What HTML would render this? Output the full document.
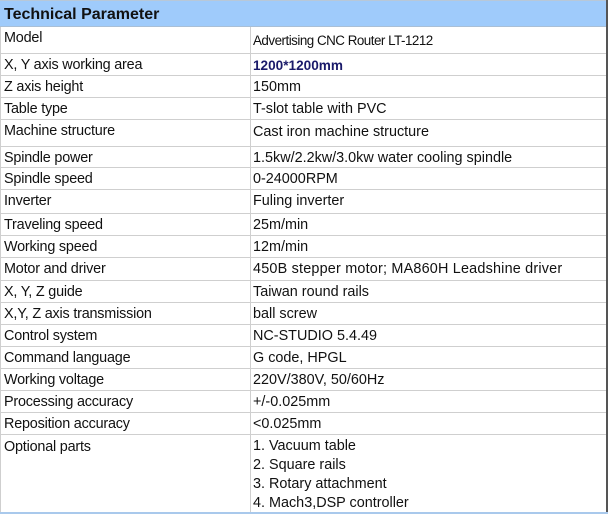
<!DOCTYPE html>
<html><head><style>
html,body{margin:0;padding:0;width:609px;height:515px;overflow:hidden;background:#fff;font-family:"Liberation Sans",sans-serif;color:#111}
.hd{position:absolute;left:0;top:0;width:607px;height:27px;background:#9fcbfb;border-top:1px solid #b8c8d8;box-sizing:border-box;font-weight:bold;font-size:16px;line-height:27px;padding-left:4px;border-bottom:1px solid #a9bfd6}
.r{position:absolute;left:0;width:607px;border-bottom:1px solid #cfcfcf;box-sizing:border-box;font-size:14.4px;line-height:17px}
.c1{position:absolute;left:4px;top:3px;letter-spacing:-0.2px}
.c2{position:absolute;left:253px;top:3px}
.v{position:absolute;left:250px;top:27px;width:1px;height:486px;background:#cfcfcf}
.rb{position:absolute;left:606px;top:0;width:2px;height:513px;background:#555}
.lb{position:absolute;left:0;top:27px;width:1px;height:486px;background:#cfcfcf}
.bb{position:absolute;left:0;top:512px;width:608px;height:2px;background:#a9c9ec}
</style></head><body>
<div class="hd">Technical Parameter</div>
<div class="r" style="top:27px;height:27px"><span class="c1">Model</span><span class="c2" style="top:5px;font-size:13.4px;letter-spacing:-0.5px">Advertising CNC Router LT-1212</span></div>
<div class="r" style="top:54px;height:22px"><span class="c1">X, Y axis working area</span><span class="c2" style="font-weight:bold;color:#1a1a6a;font-size:13.6px">1200*1200mm</span></div>
<div class="r" style="top:76px;height:22px"><span class="c1">Z axis height</span><span class="c2">150mm</span></div>
<div class="r" style="top:98px;height:22px"><span class="c1">Table type</span><span class="c2">T-slot table with PVC</span></div>
<div class="r" style="top:120px;height:27px"><span class="c1">Machine structure</span><span class="c2" style="top:4px">Cast iron machine structure</span></div>
<div class="r" style="top:147px;height:21px"><span class="c1">Spindle power</span><span class="c2">1.5kw/2.2kw/3.0kw water cooling spindle</span></div>
<div class="r" style="top:168px;height:22px"><span class="c1">Spindle speed</span><span class="c2">0-24000RPM</span></div>
<div class="r" style="top:190px;height:24px"><span class="c1">Inverter</span><span class="c2" style="top:3px">Fuling inverter</span></div>
<div class="r" style="top:214px;height:22px"><span class="c1">Traveling speed</span><span class="c2">25m/min</span></div>
<div class="r" style="top:236px;height:22px"><span class="c1">Working speed</span><span class="c2">12m/min</span></div>
<div class="r" style="top:258px;height:23px"><span class="c1">Motor and driver</span><span class="c2" style="top:3px;letter-spacing:0.2px">450B stepper motor; MA860H Leadshine driver</span></div>
<div class="r" style="top:281px;height:22px"><span class="c1">X, Y, Z guide</span><span class="c2">Taiwan round rails</span></div>
<div class="r" style="top:303px;height:22px"><span class="c1">X,Y, Z axis transmission</span><span class="c2">ball screw</span></div>
<div class="r" style="top:325px;height:22px"><span class="c1">Control system</span><span class="c2">NC-STUDIO 5.4.49</span></div>
<div class="r" style="top:347px;height:22px"><span class="c1">Command language</span><span class="c2">G code, HPGL</span></div>
<div class="r" style="top:369px;height:22px"><span class="c1">Working voltage</span><span class="c2">220V/380V, 50/60Hz</span></div>
<div class="r" style="top:391px;height:22px"><span class="c1">Processing accuracy</span><span class="c2">+/-0.025mm</span></div>
<div class="r" style="top:413px;height:22px"><span class="c1">Reposition accuracy</span><span class="c2">&lt;0.025mm</span></div>
<div class="r" style="top:435px;height:78px;border-bottom:none;line-height:19px"><span class="c1">Optional parts</span><span class="c2" style="top:2px">1. Vacuum table<br>2. Square rails<br>3. Rotary attachment<br>4. Mach3,DSP controller</span></div>
<div class="v"></div><div class="lb"></div><div class="rb"></div><div class="bb"></div>
</body></html>
